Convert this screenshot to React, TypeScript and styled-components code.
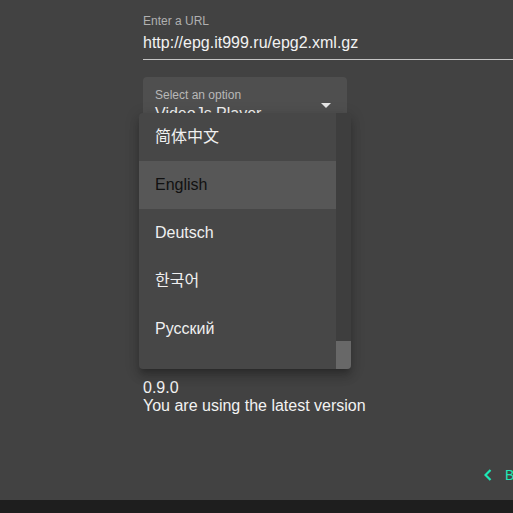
import React from "react";
import styled, { createGlobalStyle } from "styled-components";

const Global = createGlobalStyle`
  html, body { margin: 0; padding: 0; background: #424242; }
  body { font-family: "Liberation Sans", Arial, "Noto Sans CJK SC", sans-serif; }
  * { box-sizing: border-box; }
`;

const Page = styled.div`
  height: 513px;
  display: flex;
  flex-direction: column;
  background: #424242;
  overflow: hidden;
`;

const Content = styled.main`
  flex: 1;
  display: flex;
  flex-direction: column;
  padding: 14px 0 0 143px;
  min-height: 0;
`;

const Field = styled.div`
  width: 420px;
  display: flex;
  flex-direction: column;
  border-bottom: 1px solid #c4c4c4;
  padding-bottom: 7px;
`;

const FieldLabel = styled.label`
  font-size: 12px;
  line-height: 14px;
  color: #b0b0b0;
`;

const FieldValue = styled.div`
  margin-top: 5px;
  font-size: 16px;
  line-height: 19px;
  color: #f2f2f2;
`;

const SelectWrap = styled.div`
  position: relative;
  margin-top: 17px;
  width: 204px;
`;

const SelectBox = styled.div`
  height: 56px;
  border-radius: 4px 4px 0 0;
  background: #4f4f4f;
  padding: 11px 12px 0;
  display: flex;
  align-items: center;
  justify-content: space-between;
`;

const SelectTexts = styled.div`
  display: flex;
  flex-direction: column;
  align-self: flex-start;
`;

const SelectLabel = styled.span`
  font-size: 12px;
  line-height: 14px;
  color: #b8b8b8;
`;

const SelectValue = styled.span`
  margin-top: 2px;
  font-size: 16px;
  line-height: 19px;
  color: #f2f2f2;
`;

const Arrow = styled.span`
  width: 0;
  height: 0;
  margin: -10px 4px 0 0;
  border-left: 5px solid transparent;
  border-right: 5px solid transparent;
  border-top: 5px solid #e6e6e6;
`;

const Menu = styled.div`
  position: absolute;
  top: 36px;
  left: -4px;
  width: 212px;
  height: 256px;
  display: flex;
  background: #474747;
  border-radius: 4px;
  overflow: hidden;
  box-shadow: 0 5px 5px -3px rgba(0, 0, 0, 0.2), 0 8px 10px 1px rgba(0, 0, 0, 0.14),
    0 3px 14px 2px rgba(0, 0, 0, 0.12);
  z-index: 2;
`;

const MenuList = styled.ul`
  list-style: none;
  margin: 0;
  padding: 0;
  flex: 1;
  overflow: hidden;
`;

const MenuItem = styled.li<{ $active?: boolean }>`
  height: 48px;
  display: flex;
  align-items: center;
  padding: 0 16px 1px;
  font-size: 16px;
  line-height: 19px;
  font-family: "Liberation Sans", Arial, "Noto Sans CJK SC", "Noto Sans CJK KR", sans-serif;
  color: ${(p) => (p.$active ? "#111111" : "#f0f0f0")};
  background: ${(p) => (p.$active ? "#575757" : "transparent")};
`;

const Track = styled.div`
  width: 15px;
  background: #3e3e3e;
  display: flex;
  flex-direction: column;
  justify-content: flex-end;
`;

const Thumb = styled.div`
  height: 28px;
  background: #686868;
`;

const Version = styled.div`
  margin-top: 246px;
  font-size: 16px;
  line-height: 18px;
  color: #f2f2f2;
`;

const Footer = styled.div`
  height: 50px;
  display: flex;
  align-items: center;
  padding-left: 484px;
  white-space: nowrap;
  overflow: hidden;
`;

const BackButton = styled.button`
  display: flex;
  align-items: center;
  gap: 13px;
  background: none;
  border: none;
  padding: 0;
  color: #1de9b6;
  font-family: "Liberation Sans", Arial, sans-serif;
  font-size: 14px;
  letter-spacing: 0.5px;
`;

const BottomBar = styled.div`
  height: 13px;
  background: #1e1e1e;
`;

const languages = ["简体中文", "English", "Deutsch", "한국어", "Русский"];

export default function App() {
  return (
    <>
      <Global />
      <Page>
        <Content>
          <Field>
            <FieldLabel>Enter a URL</FieldLabel>
            <FieldValue>http://epg.it999.ru/epg2.xml.gz</FieldValue>
          </Field>
          <SelectWrap>
            <SelectBox>
              <SelectTexts>
                <SelectLabel>Select an option</SelectLabel>
                <SelectValue>VideoJs Player</SelectValue>
              </SelectTexts>
              <Arrow />
            </SelectBox>
            <Menu>
              <MenuList>
                {languages.map((l) => (
                  <MenuItem key={l} $active={l === "English"}>
                    {l}
                  </MenuItem>
                ))}
              </MenuList>
              <Track>
                <Thumb />
              </Track>
            </Menu>
          </SelectWrap>
          <Version>
            0.9.0
            <br />
            You are using the latest version
          </Version>
        </Content>
        <Footer>
          <BackButton>
            <svg width="8" height="12" viewBox="0 0 8 12">
              <polyline points="6.5,1 1.5,6 6.5,11" fill="none" stroke="#1de9b6" strokeWidth="2.2" />
            </svg>
            BACK
          </BackButton>
        </Footer>
        <BottomBar />
      </Page>
    </>
  );
}
